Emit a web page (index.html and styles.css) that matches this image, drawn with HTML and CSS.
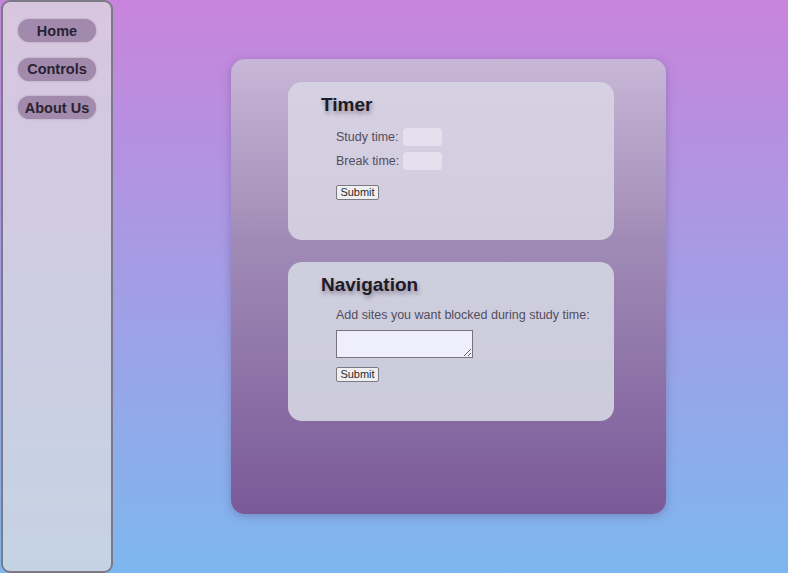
FILE: index.html
```html
<!DOCTYPE html>
<html>
<head>
<meta charset="utf-8">
<link rel="stylesheet" href="styles.css">
</head>
<body>
<nav class="sidebar">
  <a class="nav-link" href="#">Home</a>
  <a class="nav-link" href="#">Controls</a>
  <a class="nav-link" href="#">About Us</a>
</nav>
<main class="main">
  <div class="panel">
    <section class="card">
      <h2 class="card-title">Timer</h2>
      <form class="form">
        <div class="row"><label>Study time:</label><input class="time-input" type="text"></div>
        <div class="row"><label>Break time:</label><input class="time-input" type="text"></div>
        <button class="submit submit-timer" type="button">Submit</button>
      </form>
    </section>
    <section class="card">
      <h2 class="card-title">Navigation</h2>
      <form class="form">
        <p class="hint">Add sites you want blocked during study time:</p>
        <textarea class="sites"></textarea>
        <button class="submit submit-nav" type="button">Submit</button>
      </form>
    </section>
  </div>
</main>
</body>
</html>
```

FILE: styles.css
```css
html, body {
  margin: 0;
  padding: 0;
  height: 100%;
}
body {
  display: flex;
  background: linear-gradient(to bottom, #c884dc 0%, #7db7ef 100%);
  font-family: "Liberation Sans", Arial, sans-serif;
  overflow: hidden;
}
.sidebar {
  box-sizing: border-box;
  width: 112px;
  height: 573px;
  margin-left: 1px;
  border: 2px solid #7c7a86;
  border-radius: 9px;
  background: rgba(221, 221, 224, 0.74);
  display: flex;
  flex-direction: column;
  align-items: center;
  padding-top: 17px;
  gap: 15.5px;
  flex-shrink: 0;
}
.nav-link {
  width: 78px;
  height: 23px;
  border-radius: 12px;
  background: #a18aab;
  color: #2b2232;
  font-size: 14.5px;
  font-weight: bold;
  text-decoration: none;
  display: flex;
  align-items: center;
  justify-content: center;
  box-shadow: 0 0 2px rgba(120, 100, 130, 0.5);
}
.main {
  flex: 1;
  display: flex;
  justify-content: center;
  align-items: flex-start;
  padding-top: 59px;
  padding-right: 4px;
}
.panel {
  box-sizing: border-box;
  width: 435px;
  height: 455px;
  border-radius: 14px;
  background: linear-gradient(to bottom, #c8b7d7 0%, #a08bb6 40%, #7a5998 100%);
  box-shadow: 0 2px 8px rgba(80, 60, 110, 0.35);
  display: flex;
  flex-direction: column;
  align-items: center;
  padding: 23px 0 0 5px;
  gap: 22px;
}
.card {
  box-sizing: border-box;
  width: 326px;
  height: 158px;
  border-radius: 14px;
  background: rgba(216, 214, 228, 0.86);
  padding: 11px 20px 0 33px;
}
.card + .card {
  height: 159px;
  background: rgba(214, 216, 228, 0.88);
}
.card-title {
  margin: 0;
  font-size: 19px;
  line-height: 24px;
  font-weight: bold;
  color: #1e1a26;
  text-shadow: 1px 3px 4px rgba(60, 50, 70, 0.45);
}
.form {
  margin: 0;
  padding-left: 15px;
  display: flex;
  flex-direction: column;
  align-items: flex-start;
}
.row {
  display: flex;
  align-items: center;
  height: 18px;
  margin-top: 6px;
  font-size: 12.5px;
  color: #524d5e;
}
.row:first-child {
  margin-top: 11px;
}
.row label {
  margin-right: 4px;
}
.time-input {
  box-sizing: border-box;
  width: 39px;
  height: 18px;
  border: none;
  border-radius: 4px;
  background: #e6e0ee;
  padding: 0;
}
.submit {
  box-sizing: border-box;
  height: 15px;
  width: 43px;
  padding: 0;
  font-family: "Liberation Sans", Arial, sans-serif;
  font-size: 11px;
  line-height: 13px;
  color: #2a2a2e;
  background: #efeff2;
  border: 1px solid #7a7a80;
  border-radius: 2px;
}
.submit-timer {
  margin-top: 15px;
}
.hint {
  margin: 10px 0 0 0;
  font-size: 12.5px;
  line-height: 16px;
  color: #524d5e;
  white-space: nowrap;
}
.sites {
  box-sizing: border-box;
  width: 137px;
  height: 28px;
  margin-top: 7px;
  border: 1px solid #76737e;
  background: #eeeefc;
  resize: both;
}
.submit-nav {
  margin-top: 9px;
}
```
